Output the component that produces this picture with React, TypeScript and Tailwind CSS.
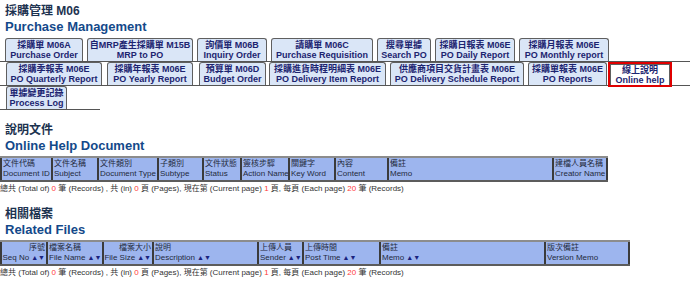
type TabItem = { zh: string; en: string; cls: string };
type Col = { zh: string; en: string; cls: string; sort?: boolean; right?: boolean };

const row1: TabItem[] = [
  { zh: "採購單 M06A", en: "Purchase Order", cls: "ml-[5px] w-[78px]" },
  { zh: "自MRP產生採購單 M15B", en: "MRP to PO", cls: "ml-[4px] w-[106px]" },
  { zh: "詢價單 M06B", en: "Inquiry Order", cls: "ml-[4px] w-[70px]" },
  { zh: "請購單 M06C", en: "Purchase Requisition", cls: "ml-[4px] w-[102px]" },
  { zh: "搜尋單據", en: "Search PO", cls: "ml-[4px] w-[54px]" },
  { zh: "採購日報表 M06E", en: "PO Daily Report", cls: "ml-[4px] w-[80px]" },
  { zh: "採購月報表 M06E", en: "PO Monthly report", cls: "ml-[4px] w-[90px]" },
];

const row2: TabItem[] = [
  { zh: "採購季報表 M06E", en: "PO Quarterly Report", cls: "ml-[6px] w-[96px]" },
  { zh: "採購年報表 M06E", en: "PO Yearly Report", cls: "ml-[5px] w-[86px]" },
  { zh: "預算單 M06D", en: "Budget Order", cls: "ml-[6px] w-[67px]" },
  { zh: "採購進貨時程明細表 M06E", en: "PO Delivery Item Report", cls: "ml-[3px] w-[117px]" },
  { zh: "供應商項目交貨計畫表 M06E", en: "PO Delivery Schedule Report", cls: "ml-[4px] w-[134px]" },
  { zh: "採購單報表 M06E", en: "PO Reports", cls: "ml-[4px] w-[79px]" },
];

const docCols: Col[] = [
  { zh: "文件代碼", en: "Document ID", cls: "w-[51px]" },
  { zh: "文件名稱", en: "Subject", cls: "w-[46px]" },
  { zh: "文件類別", en: "Document Type", cls: "w-[60px]" },
  { zh: "子類別", en: "Subtype", cls: "w-[45px]" },
  { zh: "文件狀態", en: "Status", cls: "w-[38px]" },
  { zh: "簽核步驟", en: "Action Name", cls: "w-[48px]" },
  { zh: "關鍵字", en: "Key Word", cls: "w-[46px]" },
  { zh: "內容", en: "Content", cls: "w-[53px]" },
  { zh: "備註", en: "Memo", cls: "w-[165px]" },
  { zh: "建檔人員名稱", en: "Creator Name", cls: "w-[56px] border-r-2" },
];

const fileCols: Col[] = [
  { zh: "序號", en: "Seq No", cls: "w-[46px]", sort: true, right: true },
  { zh: "檔案名稱", en: "File Name", cls: "w-[56px]", sort: true },
  { zh: "檔案大小", en: "File Size", cls: "w-[50px]", sort: true, right: true },
  { zh: "說明", en: "Description", cls: "w-[105px]", sort: true },
  { zh: "上傳人員", en: "Sender", cls: "w-[45px]", sort: true },
  { zh: "上傳時間", en: "Post Time", cls: "w-[77px]", sort: true },
  { zh: "備註", en: "Memo", cls: "w-[165px]", sort: true },
  { zh: "版次備註", en: "Version Memo", cls: "w-[86px] border-r-2" },
];

function Tab({ zh, en, cls }: TabItem) {
  return (
    <div
      className={`${cls} flex h-[23px] shrink-0 flex-col items-center justify-center whitespace-nowrap rounded-t-[3px] border border-b-0 border-[#5f5f5f] bg-[#dae6f7] text-[9px] font-bold leading-[10.5px] text-[#1c2470]`}
    >
      <span>{zh}</span>
      <span>{en}</span>
    </div>
  );
}

function Title({ zh, en, cls }: { zh: string; en: string; cls: string }) {
  return (
    <div className={`${cls} px-[5px] font-bold leading-[15px]`}>
      <div className="text-[12px] text-[#1d3350]">{zh}</div>
      <div className="text-[13px] text-[#13498a]">{en}</div>
    </div>
  );
}

function HeaderTable({ cols }: { cols: Col[] }) {
  return (
    <div className="mt-[3px] flex w-fit border-y-2 border-t-[#8c8c8c] border-b-[#5c5c5c] bg-[#9db5ee] text-[8px] leading-[10px] text-[#1f2a3c]">
      {cols.map((c) => (
        <div
          key={c.en}
          className={`${c.cls} flex h-[22px] flex-col justify-center whitespace-nowrap border-l-2 border-[#3b3b3b] px-[1px] ${c.right ? "items-end" : "items-start"}`}
        >
          <span>{c.zh}</span>
          <span>
            {c.en}
            {c.sort && <span className="ml-[2px] text-[7px] text-[#1a237e]">▲▼</span>}
          </span>
        </div>
      ))}
    </div>
  );
}

function Paging() {
  return (
    <p className="mt-[1px] whitespace-nowrap text-[8px] leading-[11px] text-[#333]">
      總共 (Total of) <span className="text-[#ff3b3b]">0</span> 筆 (Records) , 共 (in){" "}
      <span className="text-[#ff3b3b]">0</span> 頁 (Pages), 現在第 (Current page){" "}
      <span className="text-[#ff3b3b]">1</span> 頁, 每頁 (Each page){" "}
      <span className="text-[#ff3b3b]">20</span> 筆 (Records)
    </p>
  );
}

export default function App() {
  return (
    <div className="h-[304px] w-[690px] overflow-hidden bg-white pt-[4px] font-['Liberation_Sans','Noto_Sans_CJK_TC',sans-serif]">
      <Title zh="採購管理 M06" en="Purchase Management" cls="" />

      <div className="mt-[4px] flex items-end border-b border-[#555]">
        {row1.map((t) => (
          <Tab key={t.en} {...t} />
        ))}
      </div>
      <div className="flex items-end border-b border-[#555]">
        {row2.map((t) => (
          <Tab key={t.en} {...t} />
        ))}
        <div className="relative z-10 -mb-[2px] ml-[1px] h-[25px] w-[64px] shrink-0 border-2 border-[#e00000] bg-white">
          <div className="flex h-full flex-col items-center justify-center whitespace-nowrap border border-b-0 border-[#5f5f5f] text-[9px] font-bold leading-[10.5px] text-[#1c2470]">
            <span>線上說明</span>
            <span>Online help</span>
          </div>
        </div>
      </div>
      <div className="flex w-[100px] items-end border-b border-[#555]">
        <Tab zh="單據變更記錄" en="Process Log" cls="ml-[6px] w-[61px]" />
      </div>

      <Title zh="說明文件" en="Online Help Document" cls="mt-[13px]" />
      <HeaderTable cols={docCols} />
      <Paging />

      <Title zh="相關檔案" en="Related Files" cls="mt-[13px]" />
      <HeaderTable cols={fileCols} />
      <Paging />
    </div>
  );
}
